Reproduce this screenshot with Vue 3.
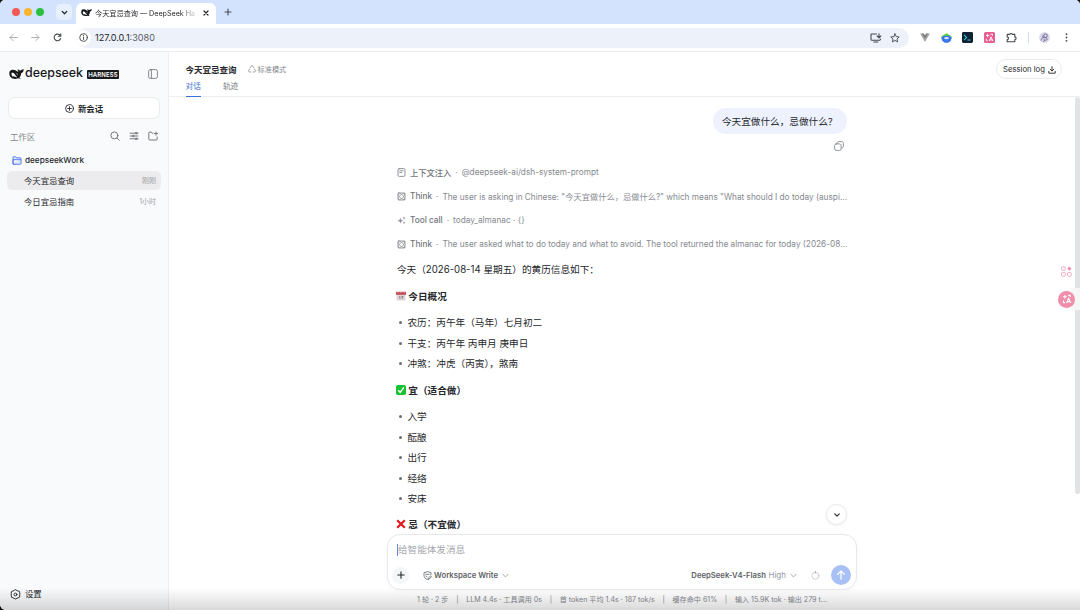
<template>
    <div class="window">
        <header class="tabstrip">
            <span v-for="c in ['red', 'yellow', 'green']" :key="c" :class="['light', c]"></span>
            <button class="tab-search" aria-label="Search tabs">
                <svg class="ic" width="7" height="7" viewBox="0 0 7 7"><path d="M1.2 2.4 3.5 4.7l2.3-2.3" stroke-width="1.3" /></svg>
            </button>
            <div class="tab">
                <svg class="whale" width="11" height="9" viewBox="0 0 26 20">
                    <path :d="whale" />
                    <path class="hole" :d="whaleHole" />
                </svg>
                <span class="tab-title">今天宜忌查询 — DeepSeek Ha</span>
                <svg class="ic tab-close" width="6" height="6" viewBox="0 0 6 6"><path d="m1 1 4 4M5 1 1 5" stroke-width="1.2" /></svg>
            </div>
            <svg class="ic new-tab" width="8" height="8" viewBox="0 0 8 8"><path d="M4 1v6M1 4h6" stroke-width="1.1" /></svg>
        </header>

        <div class="toolbar">
            <svg class="ic dim" width="9" height="9" viewBox="0 0 9 9"><path d="M8.3 4.5H1M4.3 1.2 1 4.5l3.3 3.3" /></svg>
            <svg class="ic dim forward" width="9" height="9" viewBox="0 0 9 9"><path d="M.7 4.5H8M4.7 1.2 8 4.5 4.7 7.8" /></svg>
            <svg class="ic reload" width="9" height="9" viewBox="0 0 9 9"><path d="M7.6 5.5A3.3 3.3 0 1 1 7.2 2.6M7.8.8v2.4H5.4" stroke-width="1.1" /></svg>
            <div class="omnibox">
                <span class="site-info">
                    <svg class="ic" width="9" height="9" viewBox="0 0 9 9"><circle cx="4.5" cy="4.5" r="3.8" /><path d="M4.5 4.1v2.4M4.5 2.3v.4" /></svg>
                </span>
                <span class="url">127.0.0.1<i>:3080</i></span>
                <svg class="ic" width="12" height="10" viewBox="0 0 12 10"><path d="M6.4 1H1.6a.6.6 0 0 0-.6.6v5c0 .4.2.6.6.6h8.2c.4 0 .6-.2.6-.6V6M3.8 9h4M9 .7v4M7.2 3 9 4.8 10.8 3" stroke-width="1.1" /></svg>
                <svg class="ic star" width="10" height="10" viewBox="0 0 10 10"><path d="m5 .9 1.25 2.7 2.95.35L7 6l.6 2.9L5 7.45 2.4 8.9 3 6 .8 3.95l2.95-.35z" /></svg>
            </div>
            <div class="extensions">
                <svg width="10" height="9" viewBox="0 0 10 9"><path d="M0 .5h3L5 4 7 .5h3L5 9z" fill="#aaa" /><path d="M2 .5h1.8L5 2.6 6.2.5H8L5 5.7z" fill="#777" /></svg>
                <svg width="11" height="10" viewBox="0 0 11 10"><path d="M.5 3.2 5.5.3l5 2.9v2.9H.5z" fill="#62d13c" /><path d="M.3 4.5 3 2.8h5l2.7 1.7-1 3.4-2.4 1.8H3.7L1.3 7.9z" fill="#3b78ee" /><ellipse cx="5.5" cy="5.1" rx="2.3" ry="1.2" fill="#d9e8ff" /></svg>
                <svg width="11" height="11" viewBox="0 0 11 11"><rect width="11" height="11" rx="1.4" fill="#102238" /><path d="m2.2 3 2.4 2.4-2.4 2.4M5.5 8h3" stroke="#36c7c9" fill="none" stroke-width="1.1" /></svg>
                <svg width="11" height="11" viewBox="0 0 11 11"><rect width="11" height="11" rx="1.6" fill="#e85c91" /><path :d="translateGlyph" stroke="#fff" fill="none" stroke-width=".9" /></svg>
                <svg class="ic" width="11" height="11" viewBox="0 0 11 11"><path d="M1.2 2.4h2.6a1.3 1.3 0 0 1 2.5 0h2.5v2.5a1.3 1.3 0 0 1 0 2.6v2.3H1.2V7.5a1.3 1.3 0 0 0 0-2.6z" stroke-width="1.1" /></svg>
                <span class="divider"></span>
                <svg class="avatar" width="11" height="11" viewBox="0 0 11 11"><circle cx="5.5" cy="5.5" r="5.4" fill="#dcd7ee" /><circle cx="6.5" cy="3.7" r="1.8" stroke="#5d5b78" fill="none" stroke-width=".8" /><path d="M2.2 8.6c0-2 1.2-3.2 3-3.1s3.2.7 3 1.8-2.6 1-3.5.3M4.6 3.6 3 4.4M4 9.4c1 .3 1.800-.5 1.500-1.600" stroke="#5d5b78" fill="none" stroke-width=".8" /></svg>
                <svg class="menu" width="3" height="9" viewBox="0 0 3 9"><circle v-for="y in [1.2, 4.5, 7.8]" :key="y" cx="1.5" :cy="y" r=".9" /></svg>
            </div>
        </div>

        <div class="app">
            <aside class="sidebar">
                <div class="brand">
                    <svg class="whale" width="15" height="12" viewBox="0 0 26 20">
                        <path :d="whale" />
                        <path class="hole" :d="whaleHole" />
                    </svg>
                    <span class="brand-name">deepseek</span>
                    <span class="badge">HARNESS</span>
                    <svg class="ic collapse" width="10" height="10" viewBox="0 0 10 10"><rect x=".6" y=".6" width="8.8" height="8.8" rx="1.8" /><path d="M3.4.8v8.4" /></svg>
                </div>

                <button class="new-chat">
                    <svg class="ic" width="9" height="9" viewBox="0 0 9 9"><circle cx="4.5" cy="4.5" r="3.9" /><path d="M4.5 2.7v3.6M2.7 4.5h3.6" /></svg>
                    新会话
                </button>

                <div class="section">
                    <span>工作区</span>
                    <svg class="ic" width="10" height="10" viewBox="0 0 10 10"><circle cx="4.4" cy="4.4" r="3.5" /><path d="m7 7 2.2 2.2" /></svg>
                    <svg class="ic" width="10" height="10" viewBox="0 0 10 10"><path d="M1 2.2h5M8.200 2.200h.8M1 5h2M5.200 5H9M1 7.800h5M8.200 7.800h.8" /><circle cx="7.100" cy="2.200" r=".9" /><circle cx="4.100" cy="5" r=".9" /><circle cx="7.100" cy="7.800" r=".9" /></svg>
                    <svg class="ic" width="10" height="10" viewBox="0 0 10 10"><path d="M5 2.100H4.100L3.200 1H1.600a.8.8 0 0 0-.8.8v6.400c0 .5.3.8.8.8h6.800c.5 0 .8-.3.8-.8V6M8 1v3.200M6.400 2.600h3.200" /></svg>
                </div>

                <div class="folder">
                    <svg class="ic" width="10" height="9" viewBox="0 0 10 9"><path d="M1 7.600V1.500c0-.5.3-.8.8-.8h1.700l1 1.100h3.500c.6 0 .9.3.9.8v1M1.600 8.300h6.700c.5 0 .8-.3.8-.8V3.700H1v4c0 .4.200.6.600.6z" fill="#d9e4ff" /></svg>
                    deepseekWork
                </div>
                <div v-for="s in sessions" :key="s.title" :class="['session', { active: s.active }]">
                    <span>{{ s.title }}</span>
                    <time>{{ s.time }}</time>
                </div>

                <div class="settings">
                    <svg class="ic" width="11" height="11" viewBox="0 0 11 11"><path d="m5.500.7 1.500.9 2.500.9.3 1.500-.1 3-.3 1.300-2.300.9-1.600.9-1.600-.9-2.300-.9-.3-1.300-.1-3 .3-1.500 2.500-.9z" /><circle cx="5.500" cy="5.500" r="1.400" /></svg>
                    设置
                </div>
            </aside>

            <main class="main">
                <header class="chat-header">
                    <div class="title-row">
                        <h1>今天宜忌查询</h1>
                        <svg class="ic" width="8" height="8" viewBox="0 0 8 8"><path d="M2.200 2.700 3 1.300c.4-.7 1.600-.7 2 0l.8 1.400M6.500 4l.8 1.400c.4.700-.1 1.600-.9 1.600H5.200M2.900 7H1.600c-.8 0-1.300-.9-.9-1.600L1.500 4" stroke-width=".8" /></svg>
                        <span>标准模式</span>
                    </div>
                    <nav>
                        <a class="active">对话</a>
                        <a>轨迹</a>
                    </nav>
                    <button class="log">
                        Session log
                        <svg class="ic" width="8" height="8" viewBox="0 0 8 8"><path d="M4 .6v4.300M2.200 3.200 4 5l1.800-1.800M.8 5.300v1.900h6.400V5.300" /></svg>
                    </button>
                </header>

                <section class="chat">
                    <div class="thread">
                        <div class="bubble">今天宜做什么，忌做什么？</div>
                        <svg class="ic copy" width="10" height="10" viewBox="0 0 10 10"><rect x=".6" y="2.900" width="6.500" height="6.500" rx="1.600" /><path d="M3 2.400c0-1.100.6-1.800 1.700-1.800h3c1.100 0 1.700.6 1.700 1.700v3c0 1.100-.6 1.700-1.700 1.700" /></svg>

                        <div v-for="(step, i) in steps" :key="i" class="step">
                            <svg v-if="step.icon === 'doc'" class="ic" width="9" height="9" viewBox="0 0 9 9"><rect x="1" y=".6" width="7" height="7.800" rx="1.200" /><path d="M2.800 2.800h3.400M2.800 4.600h2" /></svg>
                            <svg v-else-if="step.icon === 'tool'" class="ic" width="9" height="9" viewBox="0 0 9 9"><path d="M3.400 2.200c.2 1.700.8 2.300 2.500 2.500-1.700.2-2.300.8-2.500 2.500C3.200 5.500 2.600 4.900.9 4.700c1.700-.2 2.300-.8 2.500-2.500z" fill="currentColor" stroke-width=".3" /><path d="M7 1.400v1.400M6.300 2.100h1.400M7 6.200v1M6.500 6.700h1" stroke-width=".7" /></svg>
                            <svg v-else class="ic" width="9" height="9" viewBox="0 0 9 9"><rect x=".8" y=".8" width="7.400" height="7.400" rx="1" stroke-width=".6" /><ellipse cx="4.500" cy="4.500" rx="4.200" ry="1.800" transform="rotate(45 4.500 4.500)" stroke-width=".7" /><ellipse cx="4.500" cy="4.500" rx="4.200" ry="1.800" transform="rotate(-45 4.500 4.500)" stroke-width=".7" /></svg>
                            <b>{{ step.name }}</b>
                            <em>·</em>
                            <span>{{ step.detail }}</span>
                        </div>

                        <p class="intro">今天（2026-08-14 星期五）的黄历信息如下：</p>

                        <template v-for="g in groups" :key="g.title">
                            <h2>
                                <svg v-if="g.icon === 'calendar'" width="10" height="10" viewBox="0 0 10 10"><path d="M.6 2.500h8.800v6c0 .6-.4 1-1 1H1.600c-.6 0-1-.4-1-1z" fill="#ddd5d5" /><path d="M0 .8h10v3H0z" fill="#c54a55" /><path d="M2 0v2M5 0v2M8 0v2" stroke="#ead4d4" stroke-width=".7" /><path d="M3.200 5.500h.7V8M5.200 5.500h1.800L5.900 8" stroke="#716269" stroke-width=".7" fill="none" /></svg>
                                <svg v-else-if="g.icon === 'check'" width="10" height="10" viewBox="0 0 10 10"><rect width="10" height="10" rx="1.800" fill="#19c332" /><path d="m2.200 5.200 2 2.300 3.600-5" stroke="#fff" stroke-width="1.300" fill="none" /></svg>
                                <svg v-else width="10" height="10" viewBox="0 0 10 10"><path d="m1.200 1.200 7.600 7.600M8.800 1.200 1.200 8.800" stroke="#e21b22" stroke-width="2.300" /></svg>
                                {{ g.title }}
                            </h2>
                            <ul v-if="g.items.length">
                                <li v-for="item in g.items" :key="item">{{ item }}</li>
                            </ul>
                        </template>
                    </div>
                </section>

                <footer class="dock">
                    <button class="to-bottom" aria-label="Scroll to bottom">
                        <svg class="ic" width="8" height="8" viewBox="0 0 8 8"><path d="M1.700 2.900 4 5.100l2.300-2.200" stroke-width="1.100" /></svg>
                    </button>
                    <div class="composer">
                        <div class="placeholder">给智能体发消息</div>
                        <div class="composer-bar">
                            <button class="plus"><svg class="ic" width="8" height="8" viewBox="0 0 8 8"><path d="M4 .8v6.400M.8 4h6.400" stroke-width="1.100" /></svg></button>
                            <svg class="ic shield" width="9" height="9" viewBox="0 0 9 9"><path d="M8 3.600V1.700L4.500.6 1 1.700v2.700c0 1.900 1.300 3.200 3 4M2.900 3.300h3.200M3 5l1.100.8M5 8.300l.3-1.300 2.400-2.200.8.900-2.300 2.300z" stroke-width=".8" /></svg>
                            <b>Workspace Write</b>
                            <svg class="ic chevron" width="7" height="7" viewBox="0 0 7 7"><path d="M.8 2.200 3.500 4.900l2.700-2.700" /></svg>
                            <b class="model">DeepSeek-V4-Flash</b>
                            <span class="effort">High</span>
                            <svg class="ic chevron" width="7" height="7" viewBox="0 0 7 7"><path d="M.8 2.200 3.500 4.900l2.700-2.700" /></svg>
                            <svg class="ic ring" width="9" height="9" viewBox="0 0 9 9"><circle cx="4.500" cy="4.800" r="3.500" /><path d="M4.500.6v1.200" stroke="#999" /></svg>
                            <button class="send"><svg class="ic" width="10" height="10" viewBox="0 0 10 10"><path d="M5 9.200V1M1.600 4.400 5 1l3.400 3.400" stroke-width="1.300" /></svg></button>
                        </div>
                    </div>
                    <div class="stats">
                        <template v-for="(s, i) in stats" :key="s"><i v-if="i">|</i><span>{{ s }}</span></template>
                    </div>
                </footer>

                <div class="scrollbar"></div>
            </main>
        </div>

        <div class="floating">
            <span class="grid-tool">
                <svg width="11" height="11" viewBox="0 0 11 11" fill="none" stroke="#f3a5bb" stroke-width=".9"><rect x=".6" y=".8" width="3.600" height="3.600" rx=".6" /><rect x=".6" y="6.600" width="3.600" height="3.600" rx=".6" /><rect x="6.600" y="6.600" width="3.600" height="3.600" rx=".6" /><path d="M8.400.8 10.100 2.600 8.400 4.400 6.700 2.600z" fill="#ee7f9f" /></svg>
            </span>
            <span class="translate-tab">
                <span class="translate"><svg width="12" height="12" viewBox="0 0 11 11"><path :d="translateGlyph" stroke="#fff" fill="none" stroke-width="1" /></svg></span>
            </span>
        </div>
        <div class="shade"></div>
    </div>
</template>

<script setup>
import { ref } from 'vue';

// shared glyphs, used at more than one size
const whale = 'M1 5.5C3 2 8.500 1.500 12 4c1.500 1 3 2.500 4.500 2.300C15 5 14.800 3 15.500 1.500c1 1.800 2.500 2.700 4.200 2.500C21.500 3.800 23 1.500 25.500 2c-.2 3.600-2 5.500-4.300 6.200-.2 3.500-1.400 6-3.200 7.800.8.8 1.500 1 2.500 1.300-1.800 1-3.600.8-5 .2C8.500 20.300 1.200 17 .6 10 .4 8.300.5 6.700 1 5.500z';
const whaleHole = 'M4.500 8c2.500-.6 4.600.6 5.900 2.700 1.100 1.900 2.200 3.500 3.800 4.500-2.300 1.200-4.300-.3-5.800-1.600-.5.8-.9 1.200-1.700 1.300C4.700 13.500 3.800 10.500 4.500 8zM12.500 8.500c1.800.2 3 1.500 2.800 3-1.300-.4-2.300-1.500-2.800-3z';
const translateGlyph = 'M3.600 1.800v3.400M1.900 3.500h3.400M5.200 9.200 7 4.800l1.900 4.400M5.900 7.900h2.300M6.500 2.200h2v1.500M2.300 6.800v2h1.500';

const sessions = ref([
    { title: '今天宜忌查询', time: '刚刚', active: true },
    { title: '今日宜忌指南', time: '1小时' },
]);

const steps = ref([
    { icon: 'doc', name: '上下文注入', detail: '@deepseek-ai/dsh-system-prompt' },
    { icon: 'think', name: 'Think', detail: 'The user is asking in Chinese: "今天宜做什么，忌做什么?" which means "What should I do today (auspi...' },
    { icon: 'tool', name: 'Tool call', detail: 'today_almanac · {}' },
    { icon: 'think', name: 'Think', detail: 'The user asked what to do today and what to avoid. The tool returned the almanac for today (2026-08...' },
]);

const groups = ref([
    { icon: 'calendar', title: '今日概况', items: ['农历：丙午年（马年）七月初二', '干支：丙午年 丙申月 庚申日', '冲煞：冲虎（丙寅），煞南'] },
    { icon: 'check', title: '宜（适合做）', items: ['入学', '酝酿', '出行', '经络', '安床'] },
    { icon: 'cross', title: '忌（不宜做）', items: [] },
]);

const stats = ref(['1 轮 · 2 步', 'LLM 4.4s · 工具调用 0s', '首 token 平均 1.4s · 187 tok/s', '缓存命中 61%', '输入 15.9K tok · 输出 279 t...']);
</script>

<style>
body {
    margin: 0;
    background: #111;
    overflow: hidden;
}
</style>

<style scoped>
* {
    box-sizing: border-box;
}

.window {
    position: relative;
    width: 1080px;
    height: 610px;
    display: flex;
    flex-direction: column;
    overflow: hidden;
    background: #fff;
    border-radius: 5px 5px 0 6px;
    font-family: Inter, 'Noto Sans CJK SC', sans-serif;
    font-size: 8.4px;
    color: #25272b;
}

svg {
    flex: none;
    display: block;
}

.ic {
    fill: none;
    stroke: currentColor;
    stroke-width: .9;
    stroke-linecap: round;
    stroke-linejoin: round;
}

button {
    border: 0;
    padding: 0;
    font: inherit;
    color: inherit;
    display: flex;
    align-items: center;
    justify-content: center;
}

/* Browser chrome */
.tabstrip {
    height: 24px;
    flex: none;
    display: flex;
    align-items: center;
    padding-left: 12px;
    background: #d3e3fd;
}

.light {
    width: 8px;
    height: 8px;
    border-radius: 50%;
    margin-right: 4px;
}

.red {
    background: #f25b55;
}

.yellow {
    background: #f6b72f;
}

.green {
    background: #2bc140;
}

.tab-search {
    width: 16px;
    height: 16px;
    border-radius: 5px;
    margin: 0 4px 0 8px;
    background: #e7f0fe;
}

.tab {
    width: 140px;
    height: 21px;
    margin-top: 3px;
    padding: 0 7px 2px 5px;
    display: flex;
    align-items: center;
    background: #fff;
    border-radius: 6px 6px 0 0;
}

.whale {
    fill: #15171a;
}

.hole {
    fill: #fff;
}

.tab-title {
    width: 103px;
    margin-left: 3px;
    white-space: nowrap;
    font-size: 7.2px;
    letter-spacing: -.03px;
    -webkit-mask-image: linear-gradient(90deg, #000 82%, transparent 100%);
    mask-image: linear-gradient(90deg, #000 82%, transparent 100%);
}

.tab-close {
    margin-left: auto;
}

.new-tab {
    margin-left: 8px;
    color: #454a52;
}

.toolbar {
    height: 28px;
    flex: none;
    display: flex;
    align-items: center;
    padding: 0 12px 0 9px;
    border-bottom: 1px solid #e9ebee;
    color: #44484d;
}

.dim {
    color: #a4a7ab;
}

.forward {
    margin-left: 13px;
}

.reload {
    margin: 0 14px 0 13px;
}

.omnibox {
    width: 833px;
    height: 20px;
    padding: 0 9px 0 0;
    border-radius: 10px;
    display: flex;
    align-items: center;
    background: #edf1fa;
}

.site-info {
    width: 15px;
    height: 16px;
    border-radius: 50%;
    display: flex;
    align-items: center;
    justify-content: center;
    background: #fff;
}

.url {
    flex: 1;
    margin-left: 4px;
    font-size: 9.1px;
    color: #24272b;
}

.url i {
    font-style: normal;
    color: #5b6067;
}

.star {
    margin-left: 8px;
}

.extensions {
    flex: 1;
    display: flex;
    align-items: center;
    justify-content: space-between;
    margin-left: 11px;
}

.divider {
    width: 1px;
    height: 11px;
    background: #cbdcf8;
}

.avatar {
    margin-right: 4px;
}

.menu {
    fill: #44484d;
}

/* Sidebar */
.app {
    flex: 1;
    min-height: 0;
    display: flex;
}

.sidebar {
    width: 169px;
    flex: none;
    display: flex;
    flex-direction: column;
    padding: 14px 8px 9px;
    background: #f9fafc;
    border-right: 1px solid #eceef0;
}

.brand {
    height: 16px;
    display: flex;
    align-items: center;
    padding: 0 2px 0 1px;
}

.sidebar .hole {
    fill: #f9fafc;
}

.brand-name {
    width: 59px;
    margin: -2px 0 0 1px;
    font-size: 12.4px;
    line-height: 16px;
    font-weight: 500;
    color: #15171a;
}

.badge {
    margin-left: 3px;
    width: 32px;
    height: 9px;
    border-radius: 1px;
    line-height: 9px;
    text-align: center;
    font-size: 6px;
    font-weight: 600;
    letter-spacing: .1px;
    background: #17191c;
    color: #fff;
}

.collapse {
    margin-left: auto;
    color: #777b81;
}

.new-chat {
    height: 22px;
    margin-top: 15px;
    gap: 4px;
    flex: none;
    border: 1px solid #e9ebed;
    border-radius: 7px;
    background: #fff;
    font-weight: 600;
}

.section {
    height: 16px;
    margin-top: 9px;
    padding: 0 2px;
    display: flex;
    align-items: center;
    gap: 9px;
    color: #696d73;
}

.section span {
    flex: 1;
    color: #85898f;
}

.folder {
    height: 18px;
    margin: 7px 0 2px;
    padding-left: 4px;
    display: flex;
    align-items: center;
    gap: 3px;
    font-size: 8.2px;
    font-weight: 500;
}

.folder svg {
    color: #4c74ed;
}

.session {
    height: 19px;
    margin: 0 -1px 1.5px;
    padding: 0 5px 1px 17px;
    border-radius: 5px;
    display: flex;
    align-items: center;
    justify-content: space-between;
}

.session.active {
    background: #ececee;
}

.session time {
    font-size: 7px;
    color: #a0a3a8;
}

.settings {
    margin-top: auto;
    padding-left: 2px;
    display: flex;
    align-items: center;
    gap: 4px;
    line-height: 14px;
}

/* Conversation */
.main {
    position: relative;
    flex: 1;
    min-width: 0;
    display: flex;
    flex-direction: column;
}

.chat-header {
    position: relative;
    height: 45px;
    flex: none;
    padding: 10px 0 0 16.5px;
    display: flex;
    flex-direction: column;
    justify-content: space-between;
    border-bottom: 1px solid #eceef0;
}

.title-row {
    display: flex;
    align-items: center;
    height: 14px;
    font-size: 7.2px;
    color: #84888e;
}

.title-row h1 {
    margin: 0 11px 0 0;
    font-size: 8.5px;
    font-weight: 600;
    color: #25272b;
}

.title-row svg {
    margin-right: 2px;
}

nav {
    display: flex;
    gap: 22px;
    margin-bottom: -1px;
    font-size: 7.7px;
    line-height: 15px;
    color: #777b81;
}

nav a {
    height: 18px;
}

nav .active {
    color: #3a6fd8;
    border-bottom: 1.5px solid #3a6fd8;
}

.log {
    position: absolute;
    top: 7px;
    right: 18px;
    width: 66px;
    height: 20px;
    padding: 1px 0 0 1px;
    gap: 3px;
    border: 1px solid #e9ebed;
    border-radius: 10px;
    background: #fff;
    font-size: 7.7px;
}

.chat {
    flex: 1;
    min-height: 0;
    overflow: hidden;
    padding-right: 5px;
}

.thread {
    width: 450px;
    margin: 0 auto;
    padding-top: 11px;
    display: flex;
    flex-direction: column;
    font-size: 9.65px;
}

.bubble {
    align-self: flex-end;
    height: 26px;
    padding: 0 9.5px 0 9px;
    border-radius: 13px;
    line-height: 27px;
    background: #edf2fe;
}

.copy {
    align-self: flex-end;
    margin: 7px 3px 9px 0;
    color: #85898f;
}

.step {
    height: 24px;
    display: flex;
    align-items: center;
    white-space: nowrap;
    font-size: 8.25px;
    color: #85898f;
}

.step b {
    margin-left: 4px;
    font-weight: 500;
    color: #6f7379;
}

.step em {
    margin: 0 4px;
    font-style: normal;
}

.intro {
    margin: 4px 0 0;
    line-height: 20px;
}

h2 {
    display: flex;
    align-items: center;
    gap: 2px;
    margin: 7px 0 7.2px -.7px;
    height: 18px;
    font-size: 9.65px;
    font-weight: 600;
}

ul {
    margin: 0 0 0 -.6px;
    padding: 0;
    list-style: none;
}

li {
    display: flex;
    align-items: center;
    height: 20.5px;
}

li::before {
    content: '';
    width: 3px;
    height: 3px;
    margin: 1px 5.5px 0 2.5px;
    border-radius: 50%;
    background: #6b6e73;
}

/* Composer */
.dock {
    position: relative;
    flex: none;
    height: 76px;
    padding-right: 5px;
    display: flex;
    flex-direction: column;
    align-items: center;
}

.to-bottom {
    position: absolute;
    top: -30px;
    right: 233px;
    width: 21px;
    height: 21px;
    border-radius: 50%;
    border: 1px solid #e8eaec;
    background: #fff;
    box-shadow: 0 1px 3px rgba(0, 0, 0, .06);
}

.composer {
    width: 470px;
    height: 56px;
    padding: 9px 5px 4px 9px;
    border: 1px solid #e6e8eb;
    border-radius: 13px;
    display: flex;
    flex-direction: column;
    justify-content: space-between;
    background: #fff;
    box-shadow: 0 1px 4px rgba(0, 0, 0, .03);
}

.placeholder {
    height: 12px;
    border-left: 1px solid #6788df;
    font-size: 9.6px;
    line-height: 12px;
    color: #a5a8ad;
}

.composer-bar {
    display: flex;
    align-items: center;
    margin-left: -5px;
    font-size: 7.7px;
    color: #5b5f65;
}

.composer-bar b {
    font-weight: 600;
}

.plus {
    width: 17px;
    height: 17px;
    border-radius: 50%;
    background: #f5f6f7;
    color: #25272b;
}

.shield {
    margin: 0 2px 0 14px;
}

.chevron {
    margin-left: 4px;
    color: #9b9fa5;
}

.composer-bar .model {
    margin-left: auto;
}

.effort {
    margin-left: 2.5px;
    font-size: 8px;
    color: #93979d;
}

.ring {
    margin: 0 11px 0 14px;
    color: #c8cbd0;
}

.send {
    width: 20px;
    height: 20px;
    border-radius: 50%;
    background: #a9c0f6;
    color: #fff;
}

.stats {
    display: flex;
    align-items: center;
    height: 18px;
    white-space: nowrap;
    font-size: 7.1px;
    color: #85898f;
}

.stats i {
    margin: 0 7.7px;
    font-style: normal;
}

.scrollbar {
    position: absolute;
    top: 45px;
    right: 0;
    width: 5px;
    height: 397px;
    border-radius: 3px;
    background: #e2e3e5;
}

/* Page overlays */
.floating {
    position: absolute;
    top: 260px;
    right: 0;
    display: flex;
    flex-direction: column;
    gap: 6px;
}

.grid-tool,
.translate-tab {
    width: 22px;
    height: 22px;
    display: flex;
    align-items: center;
    padding-left: 3px;
    border-radius: 11px 0 0 11px;
}

.translate-tab {
    padding-left: 0;
    background: linear-gradient(90deg, transparent 60%, #f6f6f7 60%);
}

.translate {
    width: 17px;
    height: 17px;
    border-radius: 50%;
    display: flex;
    align-items: center;
    justify-content: center;
    background: #ef8daa;
}

.shade {
    position: absolute;
    inset: auto 0 0;
    height: 22px;
    background: linear-gradient(transparent, rgba(0, 0, 0, .15));
    pointer-events: none;
}
</style>
